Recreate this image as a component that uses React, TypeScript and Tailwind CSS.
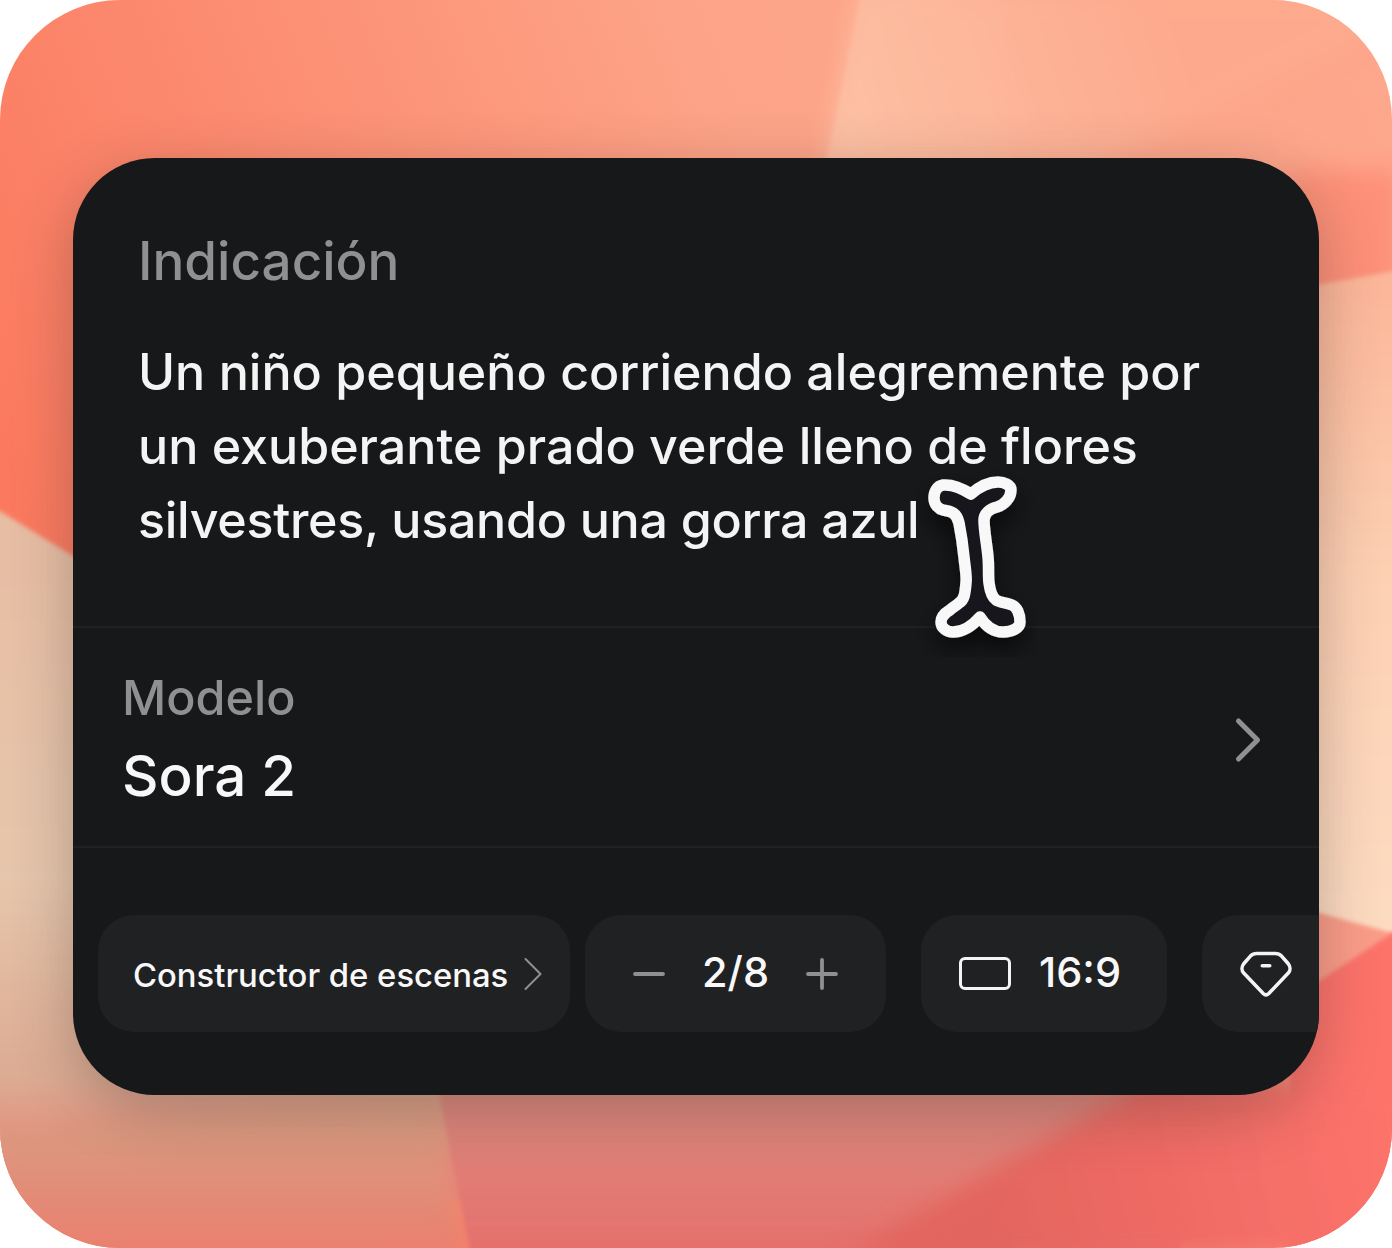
import React from 'react';
import { ChevronRight, Minus, Plus } from 'lucide-react';

const font = { fontFamily: 'Inter, "Noto Sans", sans-serif' };

// Soft wedges behind the card
function Backdrop() {
  return (
    <svg className="absolute inset-0" width="1392" height="1248" viewBox="0 0 1392 1248">
      <defs>
        <linearGradient id="base" x1="0" y1="0.35" x2="1" y2="0">
          <stop offset="0" stopColor="#fb7a5f" />
          <stop offset="0.55" stopColor="#fda488" />
          <stop offset="1" stopColor="#fda78c" />
        </linearGradient>
        <linearGradient id="topWedge" gradientUnits="userSpaceOnUse" x1="830" y1="150" x2="1180" y2="40">
          <stop offset="0" stopColor="#fdc3a6" />
          <stop offset="1" stopColor="#fdaa8e" />
        </linearGradient>
        <linearGradient id="peach" x1="0" y1="0" x2="0" y2="1">
          <stop offset="0" stopColor="#fcb598" />
          <stop offset="0.45" stopColor="#fdd0b3" />
          <stop offset="1" stopColor="#fddcc2" />
        </linearGradient>
        <linearGradient id="cream" gradientUnits="userSpaceOnUse" x1="0" y1="510" x2="0" y2="1180">
          <stop offset="0" stopColor="#e7bda3" />
          <stop offset="0.55" stopColor="#e6c6ac" />
          <stop offset="0.85" stopColor="#dcab92" />
          <stop offset="1" stopColor="#e98175" />
        </linearGradient>
        <linearGradient id="lowLeft" gradientUnits="userSpaceOnUse" x1="0" y1="1090" x2="0" y2="1248">
          <stop offset="0" stopColor="#d6a286" />
          <stop offset="1" stopColor="#e9806f" />
        </linearGradient>
        <linearGradient id="lowMid" gradientUnits="userSpaceOnUse" x1="0" y1="1096" x2="0" y2="1248">
          <stop offset="0" stopColor="#dc8a7e" />
          <stop offset="1" stopColor="#e5706c" />
        </linearGradient>
        <linearGradient id="lowDark" gradientUnits="userSpaceOnUse" x1="1000" y1="1248" x2="1392" y2="1160">
          <stop offset="0" stopColor="#e3655f" />
          <stop offset="1" stopColor="#fd736b" />
        </linearGradient>
        <filter id="edge" x="-10%" y="-10%" width="120%" height="120%">
          <feGaussianBlur stdDeviation="2" />
        </filter>
        <filter id="soft" x="-20%" y="-20%" width="140%" height="140%">
          <feGaussianBlur stdDeviation="12" />
        </filter>
      </defs>
      <rect width="1392" height="1248" fill="url(#base)" />
      <polygon points="860,-10 1400,-10 1400,20 1100,170 825,170" fill="url(#topWedge)" filter="url(#soft)" opacity="0.9" />
      <polygon points="862,-10 1000,-10 1010,170 825,170" fill="url(#topWedge)" filter="url(#edge)" opacity="0.65" />
      <rect x="1290" y="170" width="110" height="130" fill="#fd9078" filter="url(#soft)" />
      <polygon points="1290,290 1400,270 1400,945 1290,905" fill="url(#peach)" filter="url(#edge)" />
      <polygon points="1290,905 1400,935 1400,960 1290,1000" fill="#fb9d88" filter="url(#edge)" />
      <polygon points="1290,1000 1400,928 1400,1260 1290,1260" fill="#fd736b" filter="url(#edge)" />
      <polygon points="-10,505 120,585 500,585 500,1200 -10,1200" fill="url(#cream)" filter="url(#edge)" />
      <polygon points="-10,1130 436,1090 472,1260 -10,1260" fill="url(#lowLeft)" filter="url(#soft)" />
      <polygon points="436,1080 1180,1080 1180,1260 472,1260" fill="url(#lowMid)" filter="url(#edge)" />
      <polygon points="1150,1080 1400,1080 1400,1260 840,1260" fill="url(#lowDark)" filter="url(#soft)" />
    </svg>
  );
}

function IBeam() {
  return (
    <svg className="absolute left-[915px] top-[467px]" width="122" height="190" viewBox="0 0 122 190" fill="none">
      <defs>
        <filter id="beamShadow" x="-50%" y="-50%" width="200%" height="200%">
          <feDropShadow dx="0" dy="12" stdDeviation="12" floodColor="#000" floodOpacity="0.6" />
        </filter>
      </defs>
      <path
        d="M28 18C22 19 19 25 19 31C19 38 24 42 28 43C36 44 42 46 44 56C46 66 48 80 49 90C50 100 52 110 51 116C50 128 49 133 44 136C41 139 38 140 35 143C30 146 26 150 26 155C26 161 32 165 38 165C48 165 58 158 65 150C70 158 78 165 88 165C97 165 105 161 105 155C105 147 102 140 97 138C90 135 85 136 81 133C77 130 75 124 74 116C73 108 74 100 73 90C72 78 69 64 69 53C69 47 74 42 82 40C89 38 96 31 96 23C96 18 89 15 83 15C73 15 64 20 56 27C48 22 38 17 28 18Z"
        fill="#17181a"
        stroke="#f8f8f8"
        strokeWidth="11.5"
        strokeLinejoin="round"
        filter="url(#beamShadow)"
      />
    </svg>
  );
}

export default function App() {
  return (
    <div className="w-[1392px] h-[1248px] bg-white">
      <div className="relative w-full h-full rounded-[120px] overflow-hidden flex pt-[158px] pl-[73px]" style={font}>
        <Backdrop />
        <div className="relative w-[1246px] h-[937px] rounded-[82px] bg-[#17181a] overflow-hidden flex flex-col shadow-[0_16px_60px_rgba(50,40,40,0.3)]">
          <div className="h-[470px] pl-[65px] pt-[68px] border-b-2 border-[#202123]">
            <div className="text-[53px] leading-[70px] font-[450] text-[#8f9092]">Indicación</div>
            <div className="mt-[39px] text-[50.15px] leading-[74px] font-[450] text-[#f4f4f5] whitespace-nowrap">
              <div>Un niño pequeño corriendo alegremente por</div>
              <div>un exuberante prado verde lleno de flores</div>
              <div className="tracking-[-0.3px]">silvestres, usando una gorra azul</div>
            </div>
          </div>
          <div className="h-[220px] pl-[49px] pr-[33px] flex items-center justify-between border-b-2 border-[#202123]">
            <div className="mt-[4px]">
              <div className="text-[48.5px] leading-[64px] font-[450] text-[#8f9092]">Modelo</div>
              <div className="mt-[10px] text-[56.5px] leading-[72px] font-medium text-[#f8f8f8]">Sora 2</div>
            </div>
            <ChevronRight size={76} strokeWidth={1.6} className="text-[#8f9092] mt-[6px]" />
          </div>
          <div className="flex-1 pl-[25px] pt-[67px] flex gap-[15px] whitespace-nowrap">
            <div className="h-[117px] w-[472px] rounded-[36px] bg-[#202123] flex items-center pl-[35px] text-[32.8px] font-[450] text-[#f8f8f8]">
              <span className="mt-[5px]">Constructor de escenas</span>
              <ChevronRight size={60} strokeWidth={0.8} className="text-[#8f9092] -ml-[5px] shrink-0" />
            </div>
            <div className="h-[117px] w-[301px] rounded-[36px] bg-[#202123] flex items-center justify-center gap-[29px] text-[41.5px] font-[450] text-[#f8f8f8]">
              <Minus size={48} strokeWidth={1.9} className="text-[#8f9092]" />
              <span className="-mt-[2px]">2/8</span>
              <Plus size={48} strokeWidth={1.9} className="text-[#8f9092]" />
            </div>
            <div className="ml-[20px] h-[117px] w-[246px] rounded-[36px] bg-[#202123] flex items-center pl-[38px] gap-[28px] text-[41.5px] font-[450] text-[#f8f8f8]">
              <span className="w-[52px] h-[33px] rounded-[6px] border-[3px] border-[#f4f4f5]" />
              <span className="-mt-[2px]">16:9</span>
            </div>
            <div className="ml-[20px] h-[117px] flex-1 rounded-l-[36px] bg-[#202123] flex items-center pl-[38px]">
              <svg width="52" height="48" viewBox="0 0 56 50" fill="none" stroke="#f4f4f5" strokeWidth="3.8" strokeLinecap="round" strokeLinejoin="round">
                <path d="M18 3H38C41 3 43 4 45 6L52 14C54.5 17 54.5 21 52 24L31 46C29 48 27 48 25 46L4 24C1.5 21 1.5 17 4 14L11 6C13 4 15 3 18 3Z" />
                <path d="M24 16H32" />
              </svg>
            </div>
          </div>
        </div>
        <IBeam />
      </div>
    </div>
  );
}
